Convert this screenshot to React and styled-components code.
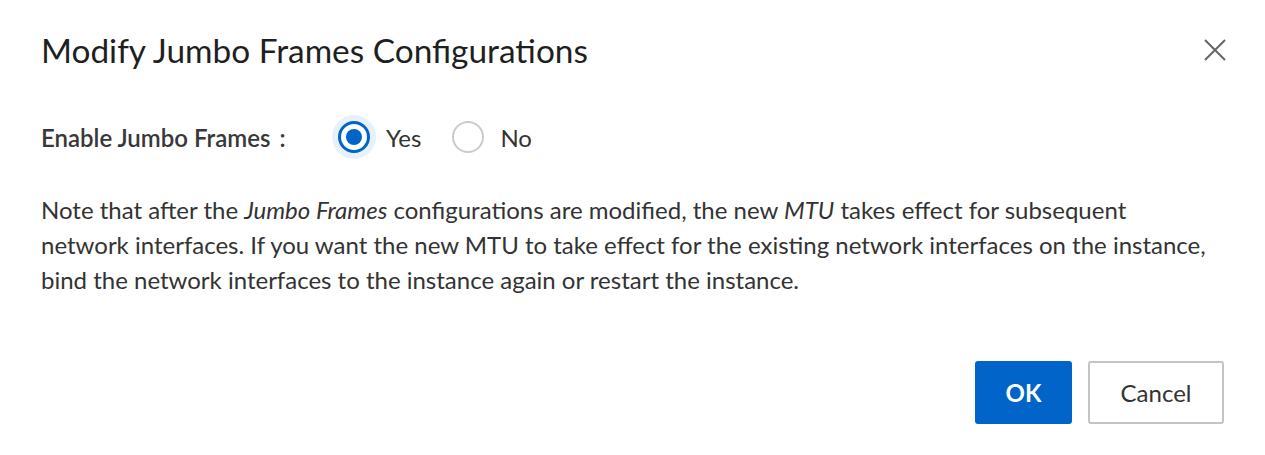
import React, { useState } from 'react';
import styled, { createGlobalStyle } from 'styled-components';

const GlobalStyle = createGlobalStyle`
  html, body {
    margin: 0;
    padding: 0;
    background: #fff;
  }
  body {
    font-family: Lato, "Noto Sans", sans-serif;
    color: #333;
  }
`;

const Dialog = styled.div`
  width: 1265px;
  height: 455px;
  box-sizing: border-box;
  padding: 26px 38px 0 41px;
  display: flex;
  flex-direction: column;
  background: #fff;
`;

const Header = styled.div`
  display: flex;
  align-items: center;
  justify-content: space-between;
  height: 48px;
`;

const Title = styled.h1`
  margin: 0;
  font-size: 33.4px;
  font-weight: 400;
  color: #1f1f1f;
`;

const CloseButton = styled.button`
  border: none;
  background: none;
  padding: 0;
  width: 24px;
  height: 24px;
  display: flex;
  align-items: center;
  justify-content: center;
  cursor: pointer;
`;

const FieldRow = styled.div`
  display: flex;
  align-items: center;
  margin-top: 40px;
  height: 46px;
`;

const Label = styled.span`
  font-size: 24px;
  font-weight: 600;
  color: #383838;
  width: 297px;
`;

const Colon = styled.span`
  margin-left: 9px;
`;

const RadioGroup = styled.div`
  display: flex;
  align-items: center;
  gap: 31px;
`;

const RadioOption = styled.label`
  display: flex;
  align-items: center;
  gap: 16px;
  font-size: 24px;
  color: #333;
  cursor: pointer;
`;

const RadioCircle = styled.span`
  width: 32px;
  height: 32px;
  box-sizing: border-box;
  border-radius: 50%;
  border: ${p => (p.$checked ? '3px solid #0064c8' : '2px solid #c8cbcf')};
  background: #fff;
  box-shadow: ${p => (p.$checked ? '0 0 0 6px #e8f1fb' : 'none')};
  display: flex;
  align-items: center;
  justify-content: center;

  &::after {
    content: '';
    width: 16px;
    height: 16px;
    border-radius: 50%;
    background: #0064c8;
    display: ${p => (p.$checked ? 'block' : 'none')};
  }
`;

const Note = styled.p`
  margin: 32px 0 0;
  font-size: 24px;
  line-height: 35px;
  color: #333;

  em {
    font-style: italic;
  }
`;

const Footer = styled.div`
  display: flex;
  justify-content: flex-end;
  gap: 16px;
  margin-top: 64px;
  padding-right: 3px;
`;

const Button = styled.button`
  height: 63px;
  box-sizing: border-box;
  padding: 0;
  width: ${p => (p.$primary ? '97px' : '136px')};
  border-radius: 3px;
  font-family: inherit;
  font-size: 24px;
  font-weight: ${p => (p.$primary ? 700 : 400)};
  border: 2px solid ${p => (p.$primary ? '#0064c8' : '#c1c4c8')};
  background: ${p => (p.$primary ? '#0064c8' : '#fff')};
  color: ${p => (p.$primary ? '#fff' : '#333')};
  cursor: pointer;
`;

const CloseIcon = () => (
  <svg width="24" height="24" viewBox="0 0 24 24">
    <path d="M2 2 L22 22 M22 2 L2 22" stroke="#666" strokeWidth="2" fill="none" />
  </svg>
);

export default function App() {
  const [enabled, setEnabled] = useState(true);

  return (
    <>
      <GlobalStyle />
      <Dialog>
        <Header>
          <Title>Modify Jumbo Frames Configurations</Title>
          <CloseButton aria-label="close">
            <CloseIcon />
          </CloseButton>
        </Header>

        <FieldRow>
          <Label>
            Enable Jumbo Frames<Colon>:</Colon>
          </Label>
          <RadioGroup>
            <RadioOption onClick={() => setEnabled(true)}>
              <RadioCircle $checked={enabled} />
              Yes
            </RadioOption>
            <RadioOption onClick={() => setEnabled(false)}>
              <RadioCircle $checked={!enabled} />
              No
            </RadioOption>
          </RadioGroup>
        </FieldRow>

        <Note>
          Note that after the <em>Jumbo Frames</em> configurations are modified, the new <em>MTU</em> takes effect for subsequent
          <br />
          network interfaces. If you want the new MTU to take effect for the existing network interfaces on the instance,
          <br />
          bind the network interfaces to the instance again or restart the instance.
        </Note>

        <Footer>
          <Button $primary>OK</Button>
          <Button>Cancel</Button>
        </Footer>
      </Dialog>
    </>
  );
}
